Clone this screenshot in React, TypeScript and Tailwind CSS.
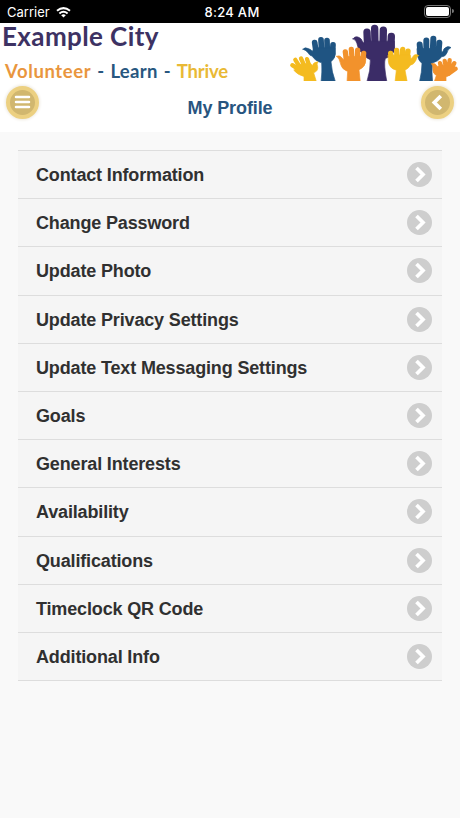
import type { ReactNode } from 'react'

const items = [
  'Contact Information',
  'Change Password',
  'Update Photo',
  'Update Privacy Settings',
  'Update Text Messaging Settings',
  'Goals',
  'General Interests',
  'Availability',
  'Qualifications',
  'Timeclock QR Code',
  'Additional Info',
]

type HandProps = {
  color: string
  fingers: string
  palm: string
  width: number
}

function Hand({ color, fingers, palm, width }: HandProps) {
  return (
    <g fill={color} stroke={color} strokeLinecap="round" strokeLinejoin="round">
      <path d={fingers} fill="none" strokeWidth={width} />
      <path d={palm} strokeWidth="2" />
    </g>
  )
}

function HandsLogo() {
  return (
    <svg className="h-[58.5px] w-[175px]" viewBox="0 7.5 525 175.5">
      {/* back row */}
      <Hand
        color="#1f5482"
        width={17}
        fingers="M89 66L94 100M108 58L110 98M126 60L127 98M144 73L142 105"
        palm="M54 86Q60 79 69 84Q77 86 82 92L88 82H150L151 101Q148 116 138 124Q140 155 152 186H108Q112 153 110 127Q90 121 82 107Q74 106 69 97Q64 89 54 86Z"
      />
      <Hand
        color="#1f5482"
        width={18}
        fingers="M404 72L407 104M424 60L424 97M445 55L443 97M463 67L460 102"
        palm="M397 84H467L470 96Q475 93 477 85Q488 74 498 81Q488 86 486 97Q481 109 470 109Q460 123 443 127Q439 153 443 186H403Q411 153 411 128Q399 121 397 100Z"
      />
      {/* centre hand */}
      <Hand
        color="#3b2c67"
        width={22}
        fingers="M246 35L248 82M269 24L270 80M295 29L294 80M319 48L317 87"
        palm="M204 55Q211 44 224 52Q229 54 232 62L240 72V62H328L329 85Q325 106 301 114Q295 130 306 186H245Q257 150 256 118Q239 111 230 96Q220 91 218 77Q214 58 204 55Z"
      />
      {/* front row */}
      <Hand
        color="#f4bb20"
        width={13}
        fingers="M31 118L48 145M48 114L61 142M66 116L74 140M22 134L45 149"
        palm="M40 132L76 128L82 135Q86 124 99 124Q94 130 98 138Q100 152 86 157L95 186H57V168Q39 164 27 150Z"
      />
      <Hand
        color="#f2922c"
        width={16}
        fingers="M181 94L185 125M199 87L202 122M218 89L218 123M236 99L232 130"
        palm="M155 107Q164 103 172 113L178 119V108H243L241 128Q236 142 222 148L226 186H186L188 153Q171 146 168 134Q163 112 155 107Z"
      />
      <Hand
        color="#f4bb20"
        width={16}
        fingers="M317 99L322 128M335 90L336 124M353 87L351 122M369 92L365 124"
        palm="M310 104H376L378 116L387 104Q394 100 401 105Q394 110 393 119Q386 133 376 134Q371 144 360 149L367 186H330L334 149Q311 143 310 122Z"
      />
      <Hand
        color="#f2922c"
        width={13}
        fingers="M465 128L473 151M479 121L484 148M494 119L490 150M508 128L493 155M512 145L492 159"
        palm="M440 130Q452 126 456 138L468 134L503 137L507 149Q497 166 483 169V186H447L454 165Q443 159 444 147Q445 136 440 130Z"
      />
    </svg>
  )
}

function RoundButton({ label, children }: { label: string; children: ReactNode }) {
  return (
    <button
      type="button"
      aria-label={label}
      className="flex size-[33px] items-center justify-center rounded-full border-[4.5px] border-[#ecd081] bg-[#d1b76f] shadow-[0_0_3px_1px_#eeeae0]"
    >
      {children}
    </button>
  )
}

function StatusBar() {
  return (
    <div className="grid h-[22.5px] grid-cols-3 items-center bg-black pt-[2px] font-['Inter'] text-[13px] text-white">
      <div className="flex items-center gap-[6px] pl-[7px]">
        <span>Carrier</span>
        <svg className="h-[11px] w-[15px]" viewBox="0 0 15 11" fill="none" stroke="currentColor" strokeWidth="2">
          <path d="M1 3.8Q7.5 -1.6 14 3.8M3.4 6.4Q7.5 3 11.6 6.4" />
          <path d="M5.2 8.2Q7.5 6.3 9.8 8.2L7.5 10.6Z" fill="currentColor" stroke="none" />
        </svg>
      </div>
      <span className="pl-[4px] text-center font-medium tracking-[0.3px]">8:24 AM</span>
      <div className="flex items-center justify-end pr-[6px] pb-[2px]">
        <div className="h-[13px] w-[27px] rounded-[4px] border border-[#777] p-px">
          <div className="h-full rounded-[2px] bg-white" />
        </div>
        <div className="ml-px h-[4px] w-[1.5px] rounded-r bg-[#777]" />
      </div>
    </div>
  )
}

export default function App() {
  return (
    <main className="h-[818px] w-[460px] overflow-hidden bg-[#f9f9f9] font-['Liberation_Sans',sans-serif]">
      <StatusBar />
      <header className="h-[109.5px] bg-white">
        <div className="flex h-[61px] justify-between">
          <div className="font-['Lato',sans-serif] font-bold whitespace-nowrap">
            <h1 className="pl-[2px] text-[26px] leading-[26px] tracking-[0.4px] text-[#3d3263]">Example City</h1>
            <p className="mt-[11px] pl-[5px] text-[18.5px] leading-[22px] tracking-[0.3px] [word-spacing:1.2px] text-[#28577f]">
              <span className="tracking-[0.6px] text-[#e9963e]">Volunteer</span> - Learn -{' '}
              <span className="tracking-[-0.2px] text-[#e9b935]">Thrive</span>
            </p>
          </div>
          <HandsLogo />
        </div>
        <div className="flex items-start justify-between px-[6px]">
          <div className="pt-[2px]">
            <RoundButton label="Menu">
              <svg className="h-[14px] w-[17px] shrink-0" viewBox="0 0 17 14" stroke="white" strokeWidth="2.5" strokeLinecap="round">
                <path d="M2 2H15M2 7H15M2 12H15" />
              </svg>
            </RoundButton>
          </div>
          <h2 className="pt-[12px] text-[18px] leading-[24px] font-bold tracking-[-0.1px] text-[#28557f]">My Profile</h2>
          <div className="pt-[2px]">
            <RoundButton label="Back">
              <svg className="mr-[2px] h-[17px] w-[12px] shrink-0" viewBox="0 0 12 17" fill="none" stroke="white" strokeWidth="3.7">
                <path d="M9.8 2L3.3 8.5L9.8 15" />
              </svg>
            </RoundButton>
          </div>
        </div>
      </header>

      <ul className="mx-[18px] mt-[18px] border-b border-[#dddddd]">
        {items.map((item) => (
          <li
            key={item}
            className="flex h-[48.2px] items-center justify-between border-t border-[#dddddd] bg-[#f5f5f5] pr-[10px] pl-[18px]"
          >
            <span className="pt-[2px] text-[18px] font-bold tracking-[-0.15px] text-[#303030]">{item}</span>
            <span className="flex size-[25px] items-center justify-center rounded-full bg-[#cecece]">
              <svg className="ml-px h-[17px] w-[12px]" viewBox="0 0 12 17" fill="none" stroke="white" strokeWidth="3.7">
                <path d="M2.5 2L9 8.5L2.5 15" />
              </svg>
            </span>
          </li>
        ))}
      </ul>
    </main>
  )
}
